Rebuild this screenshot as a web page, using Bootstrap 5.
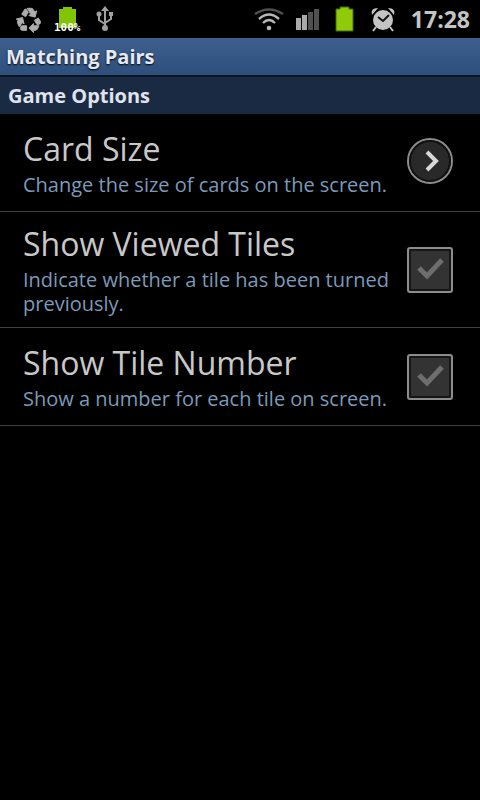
<!DOCTYPE html>
<html lang="en">
<head>
<meta charset="utf-8">
<meta name="viewport" content="width=device-width, initial-scale=1">
<title>Matching Pairs</title>
<link href="https://cdn.jsdelivr.net/npm/bootstrap@5.3.0/dist/css/bootstrap.min.css" rel="stylesheet">
<style>
body{background:#000;color:#ccc;font-family:"Open Sans","Noto Sans",sans-serif}
.status{height:38px;padding:0 10px 0 14px}
.clock{font-size:23px;line-height:38px;font-weight:700;color:#c4c4c4;margin-left:12px}
.battery-text{font-family:"DejaVu Sans Mono",monospace;font-size:11px;font-weight:700}
.titlebar{height:39px;line-height:38px;padding:0 6px;font-size:20px;font-weight:700;color:#e6eaf4;background:linear-gradient(#3f608f,#2d4f7c);border-bottom:2px solid #0c1422;text-shadow:0 1px 2px #000}
.section-title{height:37px;line-height:37px;padding:0 8px;font-size:20px;font-weight:700;color:#e0e4ee;background:#1a2a42}
.option{min-height:98px;padding:8px 27px 11px 23px;border-bottom:1px solid #404040}
.option-name{font-size:32px;line-height:48px;color:#c8c8c8}
.option-note{font-size:20px;line-height:24px;color:#7b9aba}
.go{width:46px;height:46px;background:none}
.tick-box{margin-top:4px}
.tick{appearance:none;width:46px;height:46px;border:2px solid #8c8c8c;border-radius:3px;background:#333;box-shadow:inset 0 0 0 2px #161616}
.tick-mark{pointer-events:none}
</style>
<script src="https://cdn.jsdelivr.net/npm/bootstrap@5.3.0/dist/js/bootstrap.bundle.min.js"></script>
</head>
<body>
<div class="status d-flex align-items-center justify-content-between">
  <div class="d-flex align-items-center">
    <svg width="30" height="38" viewBox="0 0 30 38" fill="#adadad" stroke="#adadad" stroke-width="0.8" aria-label="Recycle">
      <path transform="translate(1 6) scale(1.16)" d="M5.77 7.15 7.2 4.78l1.03-1.71c.39-.65 1.33-.65 1.72 0l1.48 2.46-1.23 2.06-1 1.62-3.43-2.06zm15.95 5.82-1.6-2.66-3.46 2L18.87 16H20c.76 0 1.45-.43 1.79-1.11.14-.28.21-.58.21-.89 0-.36-.1-.71-.28-1.03zM16 21h1.5c.76 0 1.45-.43 1.79-1.11L20.74 17H16v-2l-4 4 4 4v-2zm-6-4H5.7l-.84 1.41c-.3.5-.32 1.12-.06 1.65.28.57.87.94 1.52.94H10v-4zm-3.88-2.65 1.73 1.04L6.48 9.9 1 11.27l1.7 1.02-.41.69c-.35.59-.38 1.31-.07 1.92l1.63 3.26 2.27-3.81zm10.9-9.21-1.3-2.17C15.35 2.37 14.7 2 14 2h-3.53l3.12 5.2-1.72 1.03 5.49 1.37 1.37-5.49-1.71 1.03z"/>
    </svg>
    <svg width="46" height="38" viewBox="0 0 46 38" aria-label="Battery 100%">
      <path d="M15 9h4V7h9v2h4v19H15z" fill="#82c506"/>
      <text class="battery-text" x="10" y="31" fill="#fff">100%</text>
    </svg>
    <svg width="30" height="38" viewBox="0 0 30 38" fill="none" stroke="#a0a0a0" stroke-width="2" aria-label="USB">
      <path d="M15 28V10M15 24l-6-4v-5M15 23l6-4v-4"/>
      <path d="M11 11l4-5 4 5z" fill="#a0a0a0" stroke="none"/>
      <circle cx="15" cy="28" r="3" fill="#a0a0a0" stroke="none"/>
      <circle cx="9" cy="14" r="2.5" fill="#a0a0a0" stroke="none"/>
      <path d="M19 12h4v4h-4z" fill="#a0a0a0" stroke="none"/>
    </svg>
  </div>
  <div class="d-flex align-items-center">
    <svg width="32" height="38" viewBox="0 0 32 38" fill="none" stroke-width="2.4" aria-label="Wi-Fi">
      <path d="M2 14q14-9 28 0" stroke="#505050"/>
      <path d="M6 19q10-9 20 0M10 23q6-6 12 0" stroke="#b8b8b8"/>
      <circle cx="16" cy="28" r="2.3" fill="#b8b8b8"/>
    </svg>
    <svg class="ms-2" width="30" height="38" viewBox="0 0 30 38" aria-label="Signal">
      <path d="M3 18h5v12H3zM9 15h5v15H9z" fill="#aaa"/><path d="M15 12h5v18h-5zM21 9h5v21h-5z" fill="#505050"/>
    </svg>
    <svg class="ms-2" width="28" height="38" viewBox="0 0 28 38" aria-label="Battery">
      <path d="M5 9h4V7h9v2h4v22H5z" fill="#8fcb08" stroke="#426b05"/>
    </svg>
    <svg class="ms-2" width="32" height="38" viewBox="0 0 32 38" aria-label="Alarm">
      <path d="M9 27l-3 4M23 27l3 4" stroke="#c4c4c4" stroke-width="2"/>
      <path d="M5 15q-2-7 6-7zM27 15q2-7-6-7z" fill="#c4c4c4"/>
      <circle cx="16" cy="20" r="10" fill="#c4c4c4"/>
      <path d="M11 17l5 4 6-6" fill="none" stroke="#111" stroke-width="2"/>
    </svg>
    <span class="clock">17:28</span>
  </div>
</div>
<h1 class="titlebar m-0">Matching Pairs</h1>
<h2 class="section-title m-0">Game Options</h2>
<main>
  <div class="option d-flex align-items-center justify-content-between gap-2">
    <div><div class="option-name" id="size-name">Card Size</div><div class="option-note">Change the size of cards on the screen.</div></div>
    <button type="button" class="go border-0 p-0 d-flex flex-shrink-0" aria-labelledby="size-name">
      <svg width="46" height="46" viewBox="0 0 46 46" fill="none">
        <circle cx="23" cy="23" r="22" fill="#292929" stroke="#8c8c8c" stroke-width="2"/>
        <circle cx="23" cy="23" r="20" stroke="#111" stroke-width="2"/>
        <path d="M20 14l9 9-9 9" stroke="#d8d8d8" stroke-width="4"/>
      </svg>
    </button>
  </div>
  <div class="option d-flex align-items-center justify-content-between gap-2">
    <label for="viewed"><span class="option-name d-block">Show Viewed Tiles</span><span class="option-note d-block">Indicate whether a tile has been turned previously.</span></label>
    <div class="tick-box position-relative d-flex flex-shrink-0">
      <input class="tick m-0" type="checkbox" id="viewed">
      <svg class="tick-mark position-absolute top-0 start-0" width="46" height="46" viewBox="0 0 46 46" fill="none"><path d="M12 21l8 8 15-16" stroke="#6e6e6e" stroke-width="5"/></svg>
    </div>
  </div>
  <div class="option d-flex align-items-center justify-content-between gap-2">
    <label for="number"><span class="option-name d-block">Show Tile Number</span><span class="option-note d-block">Show a number for each tile on screen.</span></label>
    <div class="tick-box position-relative d-flex flex-shrink-0">
      <input class="tick m-0" type="checkbox" id="number">
      <svg class="tick-mark position-absolute top-0 start-0" width="46" height="46" viewBox="0 0 46 46" fill="none"><path d="M12 21l8 8 15-16" stroke="#6e6e6e" stroke-width="5"/></svg>
    </div>
  </div>
</main>
</body>
</html>
